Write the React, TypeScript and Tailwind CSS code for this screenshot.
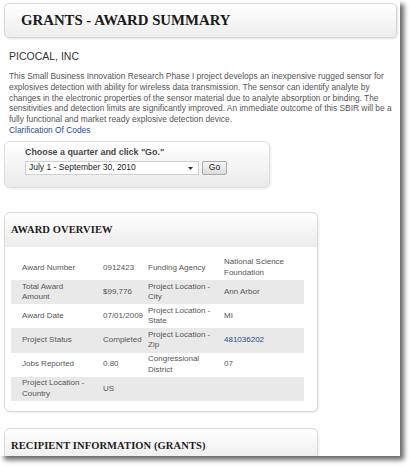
import React from 'react';

interface Row {
  label1: string;
  value1: string;
  label2: string;
  value2: string;
  link?: boolean;
}

const rows: Row[] = [
  { label1: 'Award Number', value1: '0912423', label2: 'Funding Agency', value2: 'National Science Foundation' },
  { label1: 'Total Award Amount', value1: '$99,776', label2: 'Project Location - City', value2: 'Ann Arbor' },
  { label1: 'Award Date', value1: '07/01/2009', label2: 'Project Location - State', value2: 'MI' },
  { label1: 'Project Status', value1: 'Completed', label2: 'Project Location - Zip', value2: '481036202', link: true },
  { label1: 'Jobs Reported', value1: '0.80', label2: 'Congressional District', value2: '07' },
  { label1: 'Project Location - Country', value1: 'US', label2: '', value2: '' },
];

const summary = [
  'This Small Business Innovation Research Phase I project develops an inexpensive rugged sensor for',
  'explosives detection with ability for wireless data transmission. The sensor can identify analyte by',
  'changes in the electronic properties of the sensor material due to analyte absorption or binding. The',
  'sensitivities and detection limits are significantly improved. An immediate outcome of this SBIR will be a',
  'fully functional and market ready explosive detection device.',
];

const sans = "font-['Liberation_Sans',Arial,sans-serif]";
const serif = "font-['Liberation_Serif','Times_New_Roman',serif]";

const SectionBox: React.FC<{ title: string; children?: React.ReactNode; className?: string }> = ({
  title,
  children,
  className = '',
}) => (
  <div
    className={`w-[314px] rounded-[6px] border border-[#d9d9d9] bg-white shadow-[1px_1px_2px_rgba(0,0,0,0.08)] ${className}`}
  >
    <div className="flex h-[34px] items-center rounded-t-[6px] bg-gradient-to-b from-white to-[#ececec] pl-[6px]">
      <h2 className={`${serif} text-[10.5px] font-bold tracking-[0.1px] text-[#1c1c1c]`}>{title}</h2>
    </div>
    {children}
  </div>
);

const App: React.FC = () => {
  return (
    <div className="h-[467px] w-[410px] overflow-hidden bg-white">
      <div className={`${sans} h-[456px] w-[400px] overflow-hidden bg-white px-[4px] pt-[3px] shadow-[4px_4px_5px_rgba(0,0,0,0.6)]`}>
        {/* page header */}
        <div className="flex h-[35px] w-[393px] items-center rounded-[5px] border border-[#d6d6d6] bg-gradient-to-b from-white to-[#ededed] pl-[16px] shadow-[1px_1px_2px_rgba(0,0,0,0.12)]">
          <h1 className={`${serif} text-[14.8px] font-bold text-[#1a1a1a]`}>GRANTS - AWARD SUMMARY</h1>
        </div>

        <div className="px-[5px]">
          <h3 className="mt-[12px] text-[10.5px] leading-[13px] text-[#333]">PICOCAL, INC</h3>
          <p className="mt-[8px] text-[8.4px] leading-[10.8px] text-[#555]">
            {summary.map((line, i) => (
              <span key={i} className="block whitespace-nowrap">
                {line}
              </span>
            ))}
            <a href="#" className="block text-[#2b4b8c]">
              Clarification Of Codes
            </a>
          </p>
        </div>

        {/* quarter picker */}
        <div className="mt-[5px] h-[47px] w-[266px] rounded-[6px] border border-[#dcdcdc] bg-gradient-to-b from-white to-[#ebebeb] pl-[20px] pt-[5px] shadow-[1px_1px_2px_rgba(0,0,0,0.08)]">
          <div className="text-[8.9px] font-bold leading-[10px] text-[#4a4a4a]">Choose a quarter and click "Go."</div>
          <div className="mt-[4px] flex items-center gap-[3px]">
            <div className="relative flex h-[14px] w-[174px] items-center border border-[#cfcfcf] bg-white pl-[3px]">
              <span className="text-[8.5px] text-[#222]">July 1 - September 30, 2010</span>
              <svg className="absolute right-[5px] top-[5px]" width="5" height="3" viewBox="0 0 5 3">
                <path d="M0 0h5L2.5 3z" fill="#333" />
              </svg>
            </div>
            <button className="flex h-[14px] w-[25px] items-center justify-center rounded-[2px] border border-[#a9a9a9] bg-gradient-to-b from-[#f6f6f6] to-[#dcdcdc] text-[8.5px] text-[#222]">
              Go
            </button>
          </div>
        </div>

        {/* award overview */}
        <SectionBox title="AWARD OVERVIEW" className="mt-[24px] pb-[10px]">
          <div className="mx-[6px] mt-[9px] w-[293px] text-[8px] leading-[10.5px] text-[#555]">
            {rows.map((r, i) => (
              <div
                key={i}
                className={`grid grid-cols-[92px_45px_76px_80px] items-center py-[1.6px] ${i % 2 === 1 ? 'bg-[#e9e9e9]' : ''}`}
              >
                <div className="pl-[11px] pr-[13px]">{r.label1}</div>
                <div className="whitespace-nowrap">{r.value1}</div>
                <div className="pr-[6px]">{r.label2}</div>
                <div className={`pr-[4px] ${r.link ? 'text-[#2b4b8c]' : ''}`}>{r.value2}</div>
              </div>
            ))}
          </div>
        </SectionBox>

        <SectionBox title="RECIPIENT INFORMATION (GRANTS)" className="mt-[16px] h-[60px]" />
      </div>
    </div>
  );
};

export default App;
